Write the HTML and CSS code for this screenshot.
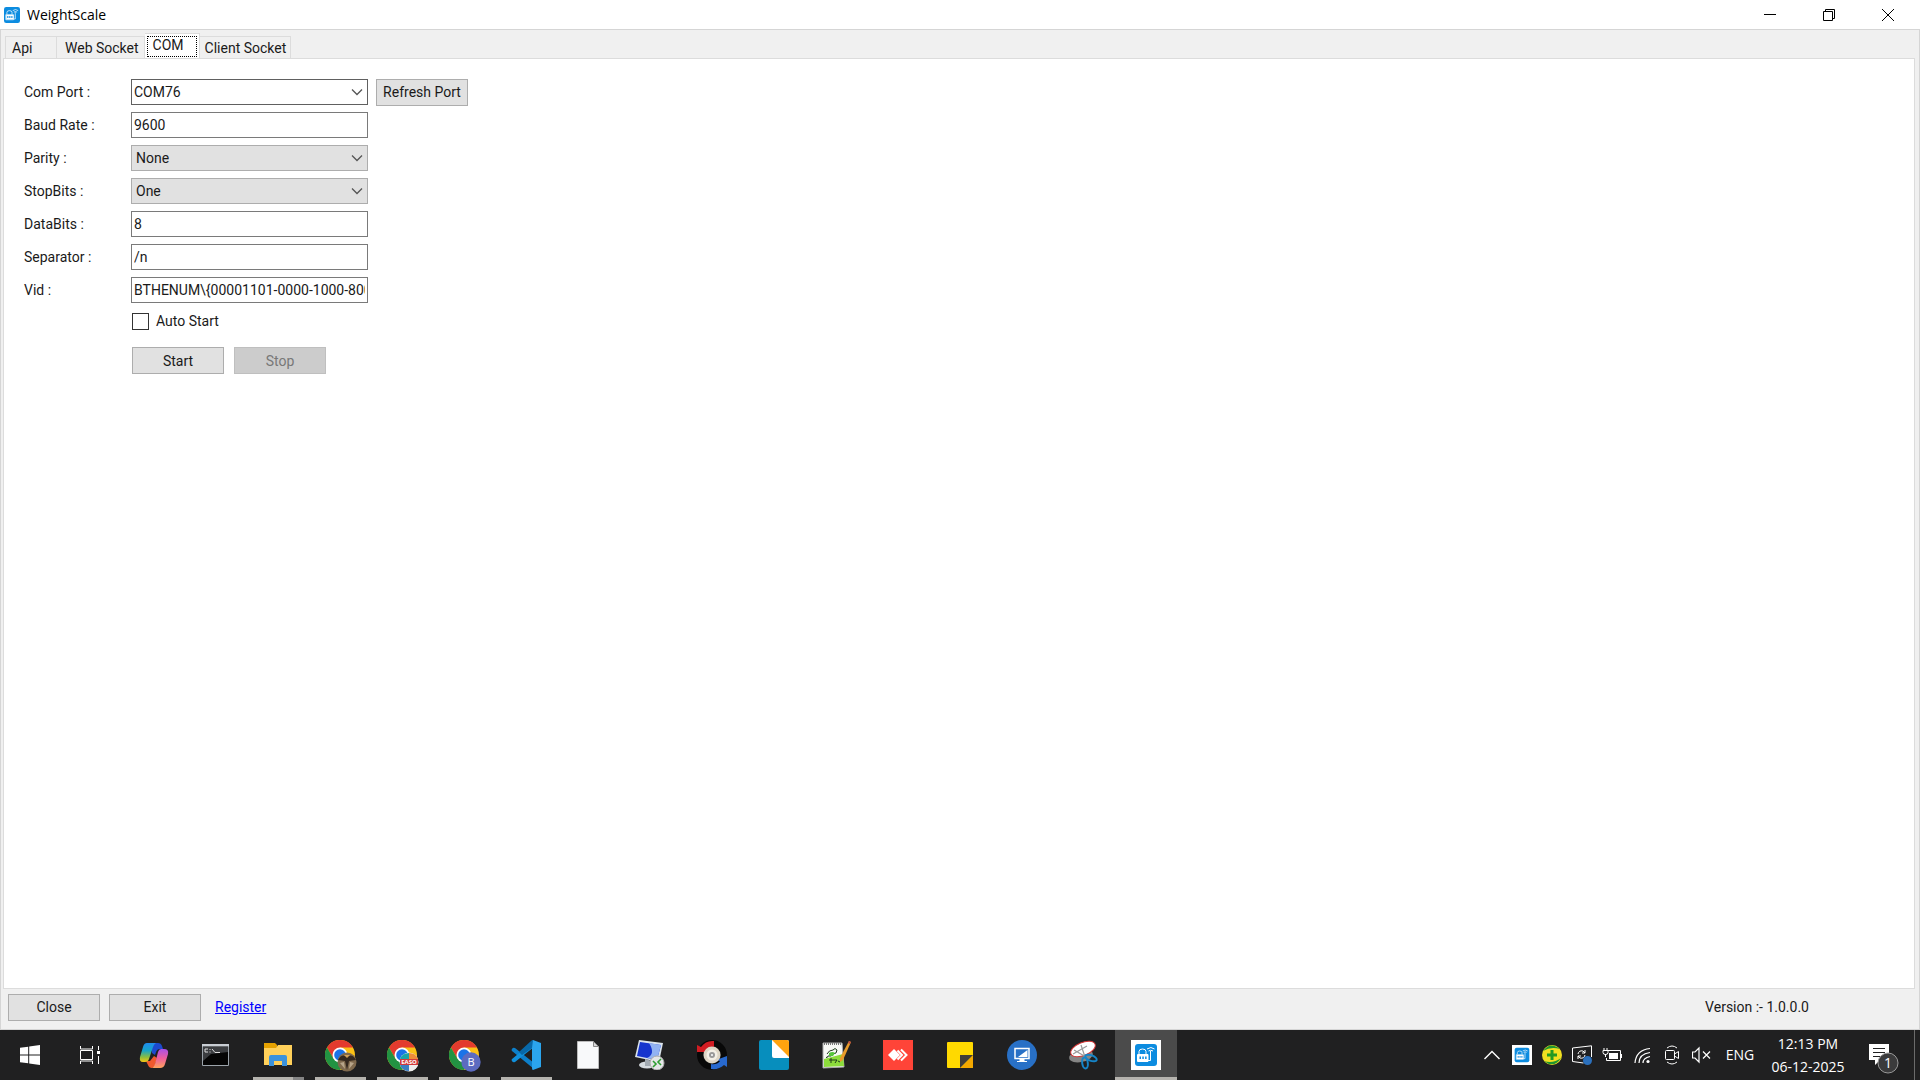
FILE: index.html
```
<!DOCTYPE html>
<html lang="en">
  <head>
    <meta charset="UTF-8" />
    <meta name="viewport" content="width=device-width, initial-scale=1.0" />
    <title>WeightScale</title>
    <link rel="stylesheet" href="styles.css">
  </head>
  <body>
    <!-- shared icons -->
    <svg class="defs" width="0" height="0">
      <symbol id="scale" viewBox="0 0 30 30">
        <rect width="30" height="30" fill="#fff" />
        <rect x="4" y="4" width="22" height="22" rx="3" fill="#0c8ce0" />
        <g fill="none" stroke="#fff" stroke-width="1">
          <path d="M8 14v-2.500a3.500 2.500 0 0 1 7 0V14M6.500 14.500h10.500v7H6.500zM17 20.500h2.500V13M16 9q4-3 7.500 0M17.500 11q2-1.500 4.500 0M19.500 11v2" />
        </g>
        <path d="M7 15h10v6H7z" fill="#fff" />
        <path d="M8.500 16.500h1.500v2.500H8.500zM11.300 16.500h1.500v2.500h-1.500zM14.100 16.500h1.500v2.500h-1.500z" fill="#0c8ce0" />
      </symbol>
      <symbol id="chrome" viewBox="0 0 30 30">
        <circle cx="15" cy="15" r="15" fill="#fbc116" />
        <path d="M2 7.500A15 15 0 0 1 28 7.500H15L8.500 18.800z" fill="#e33b2e" />
        <path d="M2 7.500A15 15 0 0 0 15 30l6.500-11.200H8.500z" fill="#229342" />
        <circle cx="15" cy="15" r="7.500" fill="#fff" />
        <circle cx="15" cy="15" r="5.800" fill="#1a73e8" />
      </symbol>
      <symbol id="chevron" viewBox="0 0 12 8">
        <path d="M1 1.500l5 5 5-5" fill="none" stroke="#555" stroke-width="1.300" />
      </symbol>
    </svg>

    <header class="titlebar">
      <svg class="title-icon" viewBox="4 4 22 22"><use href="#scale" width="30" height="30" /></svg>
      <span class="title">WeightScale</span>
      <div class="window-buttons">
        <button aria-label="Minimize"><svg width="12" height="12"><path d="M0 5.500h12" /></svg></button>
        <button aria-label="Restore"><svg width="12" height="12"><path d="M.5 2.500h9v9h-9zM2.500 2.500v-2h9v9h-2" /></svg></button>
        <button aria-label="Close window"><svg width="12" height="12"><path d="M0 0l12 12M12 0L0 12" /></svg></button>
      </div>
    </header>

    <main class="window">
      <nav class="tabs" role="tablist">
        <button class="tab tab-api" role="tab">Api</button>
        <button class="tab" role="tab">Web Socket</button>
        <button class="tab active" role="tab" aria-selected="true"><span>COM</span></button>
        <button class="tab" role="tab">Client Socket</button>
      </nav>

      <section class="panel">
        <form class="settings">
          <div class="row">
            <label for="comPort">Com Port :</label>
            <div class="select-box">
              <select id="comPort" class="editable"><option>COM76</option></select>
              <svg><use href="#chevron" /></svg>
            </div>
            <button type="button" class="btn">Refresh Port</button>
          </div>
          <div class="row">
            <label for="baudRate">Baud Rate :</label>
            <input type="text" id="baudRate" value="9600" />
          </div>
          <div class="row">
            <label for="parity">Parity :</label>
            <div class="select-box">
              <select id="parity"><option>None</option></select>
              <svg><use href="#chevron" /></svg>
            </div>
          </div>
          <div class="row">
            <label for="stopBits">StopBits :</label>
            <div class="select-box">
              <select id="stopBits"><option>One</option></select>
              <svg><use href="#chevron" /></svg>
            </div>
          </div>
          <div class="row">
            <label for="dataBits">DataBits :</label>
            <input type="text" id="dataBits" value="8" />
          </div>
          <div class="row">
            <label for="separator">Separator :</label>
            <input type="text" id="separator" value="/n" />
          </div>
          <div class="row">
            <label for="vid">Vid :</label>
            <input type="text" id="vid" value="BTHENUM\{00001101-0000-1000-8000" />
          </div>
          <div class="check-row">
            <input type="checkbox" id="autoStart" />
            <label for="autoStart">Auto Start</label>
          </div>
          <div class="actions">
            <button type="button" class="btn">Start</button>
            <button type="button" class="btn" disabled>Stop</button>
          </div>
        </form>
      </section>

      <footer class="footer">
        <button class="btn">Close</button>
        <button class="btn">Exit</button>
        <a href="#">Register</a>
        <span class="version">Version :- 1.0.0.0</span>
      </footer>
    </main>

    <div class="taskbar">
      <button class="system" aria-label="Start menu">
        <svg width="20" height="20" fill="#fff"><path d="M0 2.800L8.200 1.700V9.500H0zM9.200 1.500L20 0v9.500H9.200zM0 10.500h8.200v7.800L0 17.200zM9.200 10.500H20V20L9.200 18.500z" /></svg>
      </button>
      <button class="system" aria-label="Task view">
        <svg width="20" height="20" fill="none" stroke="#fff"><path d="M.5 1v3h12V1M.5 5.500h12v9H.5zM.5 19v-3h12v3M18.500 1v4M18.500 11v8" /><path d="M17 6h3v3h-3z" fill="#fff" stroke="none" /></svg>
      </button>

      <div class="apps">
        <button class="app" aria-label="Copilot">
          <svg width="30" height="30">
            <defs>
              <linearGradient id="cpA" x2="0" y2="1"><stop stop-color="#1f8bee" /><stop offset=".4" stop-color="#16a5c9" /><stop offset=".75" stop-color="#8ebd3c" /><stop offset="1" stop-color="#f6c714" /></linearGradient>
              <linearGradient id="cpB" x2="0" y2="1"><stop stop-color="#a850e8" /><stop offset=".5" stop-color="#ee5f9c" /><stop offset="1" stop-color="#ffa25c" /></linearGradient>
            </defs>
            <path d="M13 3h6q3 0 4 3l1 3h-3q-3 0-4 3l-1 3-3-2z" fill="#1c49cf" />
            <path d="M7 21h4l4-5 3 2-2 7q-1 3-3 3-3 0-4-3z" fill="#f0592e" />
            <path d="M8 3h9q-2 1-3 4l-4 12q-1 3-4 3H4q-4 0-3-5L4 7q1-4 4-4z" fill="url(#cpA)" />
            <path d="M22 9h3q5 0 4 5l-3 10q-1 4-5 4h-8q2-1 3-4l3-12q1-3 3-3z" fill="url(#cpB)" />
          </svg>
        </button>
        <button class="app" aria-label="Command Prompt">
          <svg width="30" height="30"><path d="M1.500 4.500h26v21h-26z" fill="#050505" stroke="#9ba3aa" /><path d="M2 7h25v5L10 14l-8 7z" fill="#3b3d40" /><path d="M1 4h27v2.500H1z" fill="#c9ced4" /><path d="M7 9H4v3h3M9 9v1M9 11.500v1M11 9l3 3.500M14 12.500h5" fill="none" stroke="#ddd" /></svg>
        </button>
        <button class="app running explorer" aria-label="File Explorer">
          <svg width="30" height="30"><path d="M1 3h11l2 2v5H1z" fill="#e5a100" /><path d="M1 8h12l2-3h14v20H1z" fill="#ffd05a" /><path d="M6 26V17q0-2 2-2h14q2 0 2 2v9h-5v-5h-8v5z" fill="#3b92dc" /></svg>
        </button>
        <button class="app running" aria-label="Chrome, first profile">
          <svg width="34" height="34"><use href="#chrome" x="2" y="2" width="30" height="30" /><circle cx="24" cy="24" r="9.500" fill="#806a4e" /><path d="M15 22q4-7 9-3 5-4 9 3l-7 1-2 9-2-9z" fill="#34281f" /><path d="M17 25l4-1 1 7zM31 25l-4-1-1 7z" fill="#b8a58a" /><path d="M21 17l3 3 3-3z" fill="#d2a158" /></svg>
        </button>
        <button class="app running" aria-label="Chrome, EASO profile">
          <svg width="34" height="34"><use href="#chrome" x="2" y="2" width="30" height="30" /><circle cx="24" cy="24" r="9.500" fill="#f1efe9" /><path d="M15 21q2-6 9-6v6z" fill="#1ba4a8" /><path d="M24 15q7 0 9 6h-9z" fill="#ef8c38" /><path d="M15 27h9v6q-7 0-9-6z" fill="#3b7ec2" /><path d="M24 27h9q-3 6-9 6z" fill="#eee" /><path d="M15 21h18v6H15z" fill="#d13a3c" /><text x="24" y="26" class="badge-small">EASO</text></svg>
        </button>
        <button class="app running" aria-label="Chrome, B profile">
          <svg width="34" height="34"><use href="#chrome" x="2" y="2" width="30" height="30" /><circle cx="24" cy="24" r="9.700" fill="#5c6bc0" /><text x="24" y="28" class="badge-letter">B</text></svg>
        </button>
        <button class="app running" aria-label="Visual Studio Code">
          <svg width="30" height="30"><path d="M1 9q1-2 3-1l19 15v6L1 11q-1-1 0-2z" fill="#0d7fca" /><path d="M1 21q1 2 3 1L23 7V1L1 19q-1 1 0 2z" fill="#1090dc" /><path d="M22 0l8 3v24l-8 3q-1 0-1-2V2q0-2 1-2z" fill="#2ba5ee" /><path d="M22 0l-1 8-10 7-3-3L20 1q1-1 2-1z" fill="#0868a8" /></svg>
        </button>
        <button class="app" aria-label="Document">
          <svg width="30" height="30"><path d="M4.500 1.500h16l5 5v22h-21z" fill="#f8f9fa" stroke="#bbb" /><path d="M20.500 1.500v5h5z" fill="#d8d8d8" stroke="#888" /></svg>
        </button>
        <button class="app" aria-label="Remote Desktop">
          <svg width="30" height="30"><ellipse cx="12" cy="25" rx="8" ry="3.500" fill="#d6dbe0" /><path d="M10 19l7 2-1 5h-6z" fill="#a3abb3" /><path d="M4 0l24 3-4 19L0 17z" fill="#dbe4ed" /><path d="M5 2l21 3-4 15L2 16z" fill="#1635ce" /><path d="M14 3l12 2-4 15-10-2q9-4 2-15z" fill="#91b2f3" /><circle cx="22" cy="23" r="7" fill="#e4e6e7" stroke="#aaa" /><path d="M18 21l3 3-3 3M26 19l-3 3 3 3" fill="none" stroke="#2e9e31" stroke-width="1.600" /></svg>
        </button>
        <button class="app" aria-label="Sync tool">
          <svg width="30" height="30"><circle cx="15" cy="15" r="12" fill="none" stroke="#080808" stroke-width="6" /><path d="M0 5l4 2Q9 0 17 1v6q-4-1-7 3l3 2H0z" fill="#d11c22" /><path d="M30 16v11l-3-2q-5 5-13 4v-5q6 1 9-3l-4-1z" fill="#2869ce" /><circle cx="15" cy="15" r="8.500" fill="#ddd5c5" /><circle cx="15" cy="15" r="5.500" fill="#f3efe6" /><circle cx="15" cy="15" r="3" fill="#999" /><circle cx="15" cy="15" r="1" fill="#fff" /></svg>
        </button>
        <button class="app" aria-label="Notes">
          <svg width="30" height="30"><rect width="30" height="30" rx="2" fill="#078ebd" /><path d="M13 0h15q2 0 2 2v16H15q-2 0-2-2z" fill="#fff" /><path d="M13 0h15q2 0 2 2v15z" fill="#ffa30f" /></svg>
        </button>
        <button class="app" aria-label="Notepad++">
          <svg width="30" height="30"><path d="M2 3h19l2 24-21 1z" fill="#f7f8f5" stroke="#aaa" /><path d="M3 19l19-5 1 12-20 1z" fill="#8cdc3b" /><path d="M3 4h18" stroke="#777" stroke-width="2" stroke-dasharray="1 1" /><path d="M6 14q2-4 6-4 2-3 4 0 0 4-4 4-1 3-5 2-1 3-2 1M8 20h8l-2 3M10 18v5M17 21l2 1" fill="none" stroke="#1c3d19" stroke-width="1" /><path d="M8 13q4-2 6 0l-2 3H8z" fill="#55c63c" /><path d="M28 1l2 1-8 18-3 2v-4z" fill="#e99b29" /><path d="M27 3l1-2 2 1-1 2z" fill="#b94a43" /></svg>
        </button>
        <button class="app" aria-label="AnyDesk">
          <svg width="30" height="30"><rect width="30" height="30" fill="#ff4438" /><path d="M5 15l6-6 6 6-6 6z" fill="#fff" /><path d="M13 9.500L14.500 8l7 7-7 7-1.500-1.500 5.500-5.500z" fill="#ff4438" /><path d="M14.500 10.500l4.500 4.500-4.500 4.500M18 9.500l5.500 5.500-5.500 5.500" fill="none" stroke="#fff" stroke-width="2" /></svg>
        </button>
        <button class="app" aria-label="Sticky Notes">
          <svg width="30" height="30"><rect x="2" y="2" width="26" height="26" rx="1" fill="#ffd900" /><path d="M28 15v12q0 1-1 1H15z" fill="#f3a800" /><path d="M15 15h13L15 28z" fill="#403d38" /></svg>
        </button>
        <button class="app" aria-label="Remote screen">
          <svg width="30" height="30"><circle cx="15" cy="15" r="15" fill="#2870c6" /><path d="M8 8.500h14v10H8z" fill="#2870c6" stroke="#fff" stroke-width="1.500" /><path d="M20.500 10v7H11z" fill="#fff" /><path d="M13 19h4v2h-4zM10 21.500h10" fill="#fff" stroke="#fff" /></svg>
        </button>
        <button class="app" aria-label="Snipping Tool">
          <svg width="30" height="30"><ellipse cx="12" cy="16" rx="12" ry="6" fill="#858585" transform="rotate(-12 12 16)" /><ellipse cx="14" cy="9" rx="13" ry="6.500" fill="#fff" stroke="#d53434" transform="rotate(-22 14 9)" /><path d="M5 10l12 7M12 5l4 12M4 14l14-8" stroke="#999" stroke-width="1.200" /><g fill="none" stroke="#1684c7" stroke-width="2"><ellipse cx="22" cy="18" rx="6" ry="2.800" transform="rotate(20 22 18)" /><ellipse cx="16" cy="23" rx="2.800" ry="5.500" transform="rotate(-8 16 23)" /></g></svg>
        </button>
        <button class="app current" aria-label="WeightScale">
          <svg width="30" height="30"><use href="#scale" /></svg>
        </button>
      </div>

      <div class="tray">
        <button aria-label="Show hidden icons"><svg width="20" height="20" fill="none" stroke="#fff" stroke-width="1.400"><path d="M2.500 14L10 6.500l7.500 7.500" /></svg></button>
        <button aria-label="WeightScale status"><svg width="20" height="20"><use href="#scale" /></svg></button>
        <button aria-label="Antivirus"><svg width="20" height="20"><circle cx="10" cy="10" r="10" fill="#f1df21" /><path d="M1 6Q8-4 18 4q-9-3-17 2zM19 13q-7 11-17 3 9 3 17-3z" fill="#20962f" /><path d="M8.500 5h3v3.500H15v3h-3.500V15h-3v-3.500H5v-3h3.500z" fill="#239923" /></svg></button>
        <button aria-label="Sync status"><svg width="20" height="20" fill="none" stroke="#fff"><path d="M19.500 12V.8L.5 3v13.500l11 1.500" /><path d="M6 9q1-4 5-3l2 2M13 5v3h-3M13 10q-1 4-5 3l-2-2M6 14v-3h3" /><circle cx="15.500" cy="15.500" r="4.500" fill="#2b70bd" stroke="none" /></svg></button>
        <button aria-label="Battery"><svg width="20" height="20" fill="none" stroke="#fff"><path d="M5 5.500h13.500v10h-14V13M19.500 9v4" /><path d="M7 8h9v6H7z" fill="#fff" stroke="none" /><path d="M1 5.500h5v2q0 2-2.500 2T1 7.500zM2 3v3M5 3v3M3.500 9v3" /></svg></button>
        <button aria-label="Wi-Fi"><svg width="20" height="20" fill="none" stroke="#fff" stroke-width="1.200"><path d="M3 18Q4 5 18 3.500M7 18Q7 9 18 7.500M11 18q0-5 7-6.500" /><circle cx="16" cy="16.500" r="1.600" fill="#fff" stroke="none" /></svg></button>
        <button aria-label="Meet now"><svg width="20" height="20" fill="none" stroke="#fff"><rect x="3.500" y="5.500" width="9" height="9" rx="1" /><path d="M12.500 9l4-2.500v7l-4-2.500M5 3q5-4 10 0M5 17q5 4 10 0" /></svg></button>
        <button aria-label="Speakers muted"><svg width="20" height="20" fill="none" stroke="#fff" stroke-width="1.200"><path d="M.5 7H3l4-4v14l-4-4H.5zM11 6.500l7 7M18 6.500l-7 7" /></svg></button>
        <span class="language">ENG</span>
        <div class="clock"><span>12:13 PM</span><span>06-12-2025</span></div>
        <button class="notifications" aria-label="Notifications">
          <svg width="32" height="32"><path d="M1 1h20v16h-9l-5 5v-5H1z" fill="#fff" /><path d="M5 5.500h12M5 9.500h12M5 13.500h8" stroke="#202021" /><circle cx="20" cy="20" r="10" fill="#3b3b3c" stroke="#999" /><text x="20" y="25" class="badge-count">1</text></svg>
        </button>
        <div class="show-desktop"></div>
      </div>
    </div>
  </body>
</html>
```

FILE: styles.css
```
*,
*::after {
  box-sizing: border-box;
}
body {
  display: flex;
  flex-direction: column;
  height: 100vh;
  margin: 0;
  font-family: Roboto, "Liberation Sans", sans-serif;
  font-size: 14px;
  line-height: 18px;
  color: #1a1a1a;
  background-color: #f0f0f0;
}
button,
input,
select {
  font: inherit;
  color: inherit;
}
button {
  padding: 0;
  border: none;
  background: none;
}
svg {
  display: block;
}
.defs {
  position: absolute;
}

/* Title bar */
.titlebar {
  display: flex;
  align-items: center;
  height: 29px;
  padding-left: 4px;
  background-color: #fff;
}
.title-icon {
  width: 16px;
  height: 16px;
}
.title {
  margin-left: 7px;
  font-family: "Open Sans", sans-serif;
  font-size: 14px;
  color: #000;
}
.window-buttons {
  display: flex;
  margin-left: auto;
  padding-right: 3px;
}
.window-buttons button {
  display: flex;
  align-items: center;
  justify-content: center;
  width: 59px;
  height: 28px;
}
.window-buttons path {
  fill: none;
  stroke: #000;
}

/* Window body */
.window {
  display: flex;
  flex: 1;
  flex-direction: column;
  padding: 3px 4px 0 2px;
  border: 1px solid #d5d5d5;
}
.tabs {
  display: flex;
  align-items: flex-end;
  height: 25px;
  padding-left: 2px;
}
.tab {
  height: 22px;
  padding: 0 5px 0 8px;
  border: 1px solid #dcdcdc;
  border-bottom: none;
  border-left: none;
}
.tab-api {
  width: 52px;
  padding-left: 6px;
  border-left: 1px solid #dcdcdc;
  text-align: left;
}
.tab.active {
  height: 25px;
  padding: 2px;
  background-color: #fff;
}
.tab.active span {
  display: block;
  width: 50px;
  height: 21px;
  padding-left: 5px;
  border: 1px dotted #000;
  line-height: 17px;
  text-align: left;
}
.tab.active + .tab {
  padding: 0 4px 0 5px;
}
.panel {
  flex: 1;
  padding: 20px;
  border: 1px solid #dcdcdc;
  background-color: #fff;
}

/* Settings form */
.settings {
  display: flex;
  flex-direction: column;
  gap: 7px;
}
.row {
  display: flex;
  align-items: center;
  height: 26px;
}
.row > label {
  width: 107px;
}
input[type="text"],
select {
  width: 237px;
  height: 26px;
  padding: 0 2px;
  border: 1px solid #7a7a7a;
  border-radius: 0;
  background-color: #fff;
}
select {
  appearance: none;
  padding: 0 4px;
  border-color: #adadad;
  background-color: #e1e1e1;
}
select.editable {
  padding: 0 2px;
  border-color: #606060;
  background-color: #fff;
}
.select-box {
  position: relative;
}
.select-box svg {
  position: absolute;
  top: 9px;
  right: 5px;
  width: 12px;
  height: 8px;
  pointer-events: none;
}
.btn {
  width: 92px;
  height: 27px;
  border: 1px solid #adadad;
  background-color: #e1e1e1;
}
.btn:disabled {
  border-color: #bfbfbf;
  background-color: #ccc;
  color: #787878;
}
.row .btn {
  margin-left: 8px;
}
.check-row {
  display: flex;
  align-items: center;
  gap: 7px;
  height: 22px;
  margin-left: 108px;
}
.check-row input {
  appearance: none;
  width: 17px;
  height: 17px;
  margin: 0;
  border: 1px solid #333;
  background-color: #fff;
}
.actions {
  display: flex;
  gap: 10px;
  margin-top: 8px;
  margin-left: 108px;
}

/* Footer */
.footer {
  display: flex;
  align-items: center;
  gap: 9px;
  height: 40px;
  padding: 0 106px 4px 5px;
}
.footer a {
  margin-left: 5px;
  color: #00f;
}
.version {
  margin-left: auto;
}

/* Taskbar */
.taskbar {
  display: flex;
  height: 50px;
  background-color: #202021;
  color: #fff;
  font-family: "Open Sans", sans-serif;
}
.taskbar button {
  display: flex;
  align-items: center;
  justify-content: center;
}
.system {
  width: 60px;
}
.apps {
  display: flex;
  margin-left: 3px;
}
.app {
  position: relative;
  width: 62px;
}
.running::after {
  content: "";
  position: absolute;
  bottom: 0;
  left: 6px;
  width: 51px;
  height: 3px;
  background-color: #b5b3ae;
}
.explorer::after {
  border-right: 11px solid #858585;
}
.taskbar .current {
  border-bottom: 3px solid #b5b3ae;
  padding-top: 3px;
  background-color: #4b4b4b;
}
.badge-letter,
.badge-small,
.badge-count {
  fill: #fff;
  font-size: 11px;
  text-anchor: middle;
}
.badge-small {
  font-size: 6px;
  font-weight: bold;
}
.badge-count {
  font-size: 14px;
}
.tray {
  display: flex;
  align-items: stretch;
  margin-left: auto;
}
.tray button {
  width: 30px;
}
.language {
  width: 46px;
  line-height: 50px;
  text-align: center;
}
.clock {
  display: flex;
  flex-direction: column;
  justify-content: center;
  width: 90px;
  line-height: 23px;
  text-align: center;
}
.tray .notifications {
  width: 61px;
  padding-top: 8px;
}
.show-desktop {
  width: 6px;
  border-left: 1px solid #6b6b6b;
}
```
